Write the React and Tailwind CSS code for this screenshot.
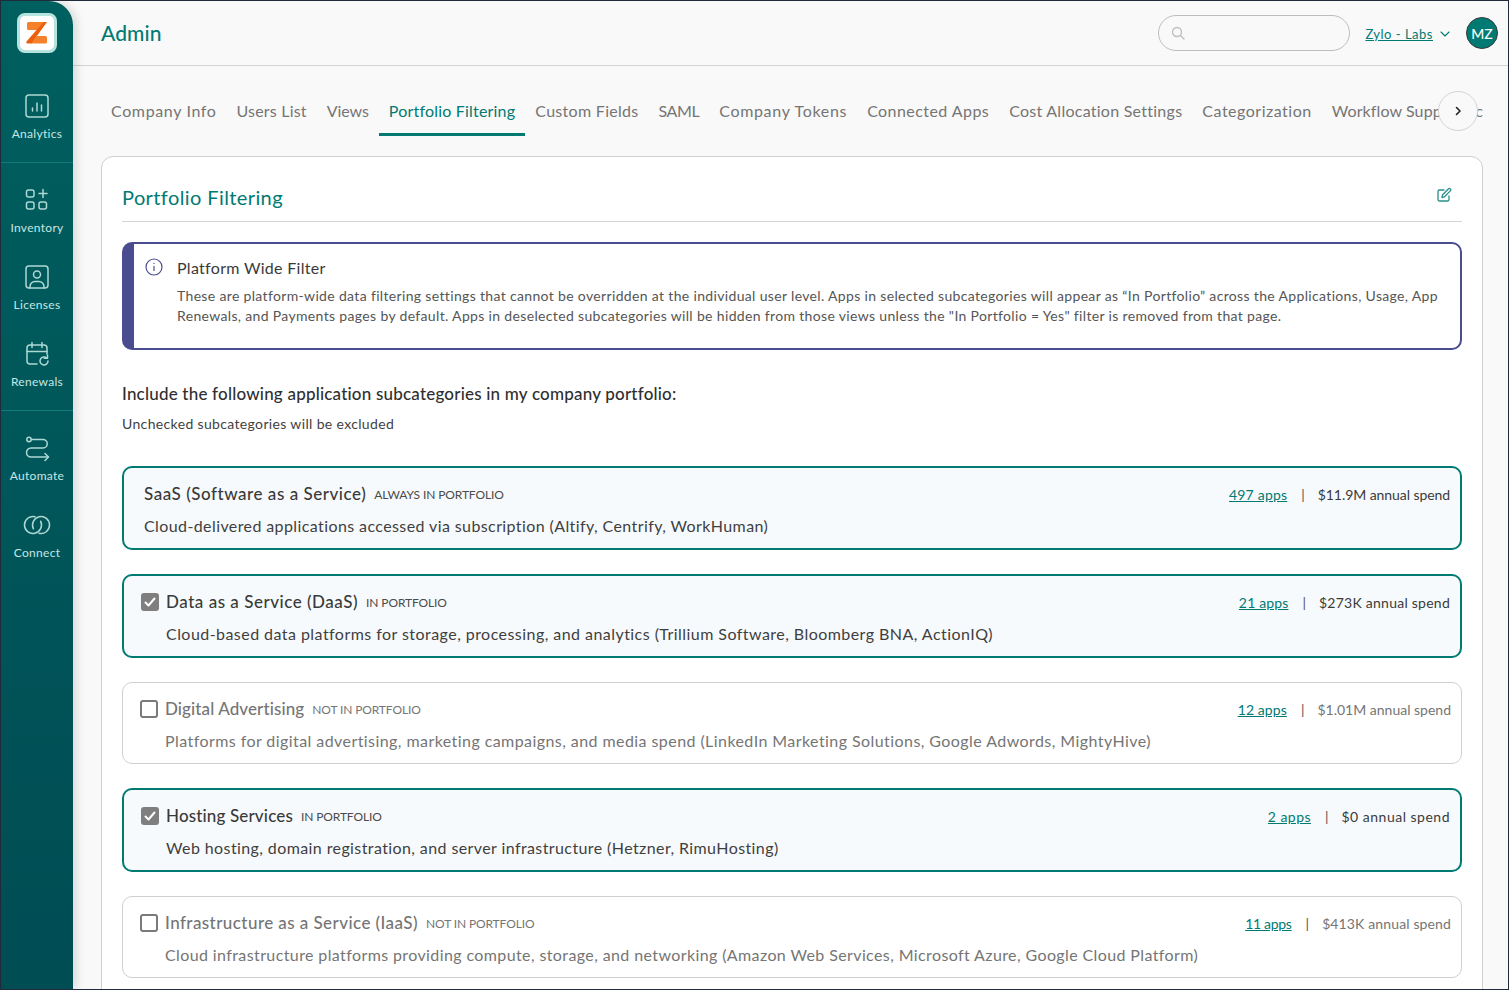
const ICON = { width: 28, height: 28, viewBox: "0 0 28 28", fill: "none", stroke: "#add8d4", strokeWidth: 1.5, strokeLinecap: "round", strokeLinejoin: "round" };

const icons = {
  analytics: (
    <svg {...ICON}>
      <rect x="3" y="3" width="22" height="22" rx="3" />
      <path d="M9.500 19v-3M14 19V11M18.500 19v-6" />
    </svg>
  ),
  inventory: (
    <svg {...ICON}>
      <rect x="3.500" y="4" width="7.500" height="7" rx="2" />
      <rect x="3.500" y="16" width="7.500" height="7" rx="2" />
      <rect x="16" y="16" width="7.500" height="7" rx="2" />
      <path d="M20 3.500v8M16 7.500h8" />
    </svg>
  ),
  licenses: (
    <svg {...ICON}>
      <rect x="3" y="3" width="22" height="22" rx="3" />
      <circle cx="14" cy="11.500" r="3.500" />
      <path d="M7 25v-1.500a5 5 0 0 1 5-5h4a5 5 0 0 1 5 5V25" />
    </svg>
  ),
  renewals: (
    <svg {...ICON}>
      <path d="M14 24H7a3 3 0 0 1-3-3V8a3 3 0 0 1 3-3h14a3 3 0 0 1 3 3v6" />
      <path d="M9 2.500v5M19 2.500v5M4 11.500h20" />
      <path d="M25 21a4 4 0 1 1-1.300-3" />
      <path d="M24.500 15v3.300h-3.200" />
    </svg>
  ),
  automate: (
    <svg {...ICON}>
      <circle cx="6" cy="5.500" r="2.200" />
      <path d="M8.500 5.500H20a4 4 0 0 1 0 8.500H8a4.500 4.500 0 0 0 0 9h17" />
      <path d="M22 19.500l3.500 3.500-3.500 3.500" />
    </svg>
  ),
  connect: (
    <svg {...ICON}>
      <path d="M12 5.700A8.500 8.500 0 1 0 17.600 10.200" />
      <path d="M16 22.300A8.500 8.500 0 1 0 10.400 17.800" />
    </svg>
  ),
};

const Logo = () => (
  <div className="w-10 h-10 rounded-lg bg-white border-[3px] border-[#b5e3de] flex items-center justify-center">
    <svg width="26" height="26" viewBox="0 0 26 26">
      <path d="M3 3.500a1.500 1.500 0 0 1 1.500-1.500H20l-7 8H4.500A1.500 1.500 0 0 1 3 8.500z" fill="#f5822a" />
      <path d="M13 16h8.500a1.500 1.500 0 0 1 1.500 1.500V22a1.500 1.500 0 0 1-1.500 1.500H7z" fill="#f5822a" />
      <path d="M19.500 2H23L7.500 23.500H3.500a1.200 1.200 0 0 1-1-1.900z" fill="#ec5f0d" />
    </svg>
  </div>
);

const NavItem = ({ icon, label }) => (
  <div className="h-[77px] flex flex-col items-center pt-[15px]">
    {icons[icon]}
    <span className="mt-[6px] text-[12px] leading-[16px] tracking-[0.3px] text-[#c6e6e3]">{label}</span>
  </div>
);

const tabs = [
  { t: "Company Info", c: "tracking-[0.63px]" },
  { t: "Users List", c: "tracking-[0.2px]" },
  { t: "Views", c: "tracking-[-0.1px]" },
  { t: "Portfolio Filtering", c: "tracking-[0.2px]" },
  { t: "Custom Fields", c: "tracking-[0.3px]" },
  { t: "SAML", c: "tracking-[-0.45px]" },
  { t: "Company Tokens", c: "tracking-[0.68px]" },
  { t: "Connected Apps", c: "tracking-[0.44px]" },
  { t: "Cost Allocation Settings", c: "tracking-[0.26px]" },
  { t: "Categorization", c: "tracking-[0.51px]" },
];

const rows = [
  { title: "SaaS (Software as a Service)", tag: "ALWAYS IN PORTFOLIO", desc: "Cloud-delivered applications accessed via subscription (Altify, Centrify, WorkHuman)", apps: "497 apps", spend: "$11.9M annual spend", state: "always", tt: "tracking-[0.53px]", dt: "tracking-[0.4px]", at: "tracking-[0.2px]", st: "tracking-[-0.07px]" },
  { title: "Data as a Service (DaaS)", tag: "IN PORTFOLIO", desc: "Cloud-based data platforms for storage, processing, and analytics (Trillium Software, Bloomberg BNA, ActionIQ)", apps: "21 apps", spend: "$273K annual spend", state: "on", tt: "tracking-[0.52px]", dt: "tracking-[0.45px]", at: "tracking-[0.15px]", st: "tracking-[0.25px]" },
  { title: "Digital Advertising", tag: "NOT IN PORTFOLIO", desc: "Platforms for digital advertising, marketing campaigns, and media spend (LinkedIn Marketing Solutions, Google Adwords, MightyHive)", apps: "12 apps", spend: "$1.01M annual spend", state: "off", tt: "tracking-[0.1px]", dt: "tracking-[0.43px]", at: "tracking-[0.1px]", st: "tracking-[0px]" },
  { title: "Hosting Services", tag: "IN PORTFOLIO", desc: "Web hosting, domain registration, and server infrastructure (Hetzner, RimuHosting)", apps: "2 apps", spend: "$0 annual spend", state: "on", tt: "tracking-[0.15px]", dt: "tracking-[0.4px]", at: "tracking-[0.45px]", st: "tracking-[0.5px]" },
  { title: "Infrastructure as a Service (IaaS)", tag: "NOT IN PORTFOLIO", desc: "Cloud infrastructure platforms providing compute, storage, and networking (Amazon Web Services, Microsoft Azure, Google Cloud Platform)", apps: "11 apps", spend: "$413K annual spend", state: "off", tt: "tracking-[0.43px]", dt: "tracking-[0.39px]", at: "tracking-[-0.3px]", st: "tracking-[0.13px]" },
];

const Check = ({ on }) =>
  on ? (
    <span className="w-[18px] h-[18px] rounded-[3px] bg-[#7f7f7f] flex items-center justify-center shrink-0">
      <svg width="14" height="14" viewBox="0 0 14 14" fill="none" stroke="#fff" strokeWidth="2" strokeLinecap="round" strokeLinejoin="round">
        <path d="M2.500 7.500l3 3 6-7" />
      </svg>
    </span>
  ) : (
    <span className="w-[18px] h-[18px] rounded-[3px] border-2 border-[#7a7a7a] bg-white shrink-0" />
  );

const Row = ({ title, tag, desc, apps, spend, state, tt, dt, at, st }) => {
  const off = state === "off";
  const always = state === "always";
  return (
    <div
      className={
        off
          ? "h-[82px] rounded-[10px] border border-[#d0d0d0] bg-white pl-[17px] pr-[10px] pt-[15px] flex gap-[7px]"
          : "h-[84px] rounded-[10px] border-2 border-[#007a73] bg-[#f7fafc] pl-[17px] pr-[10px] pt-[15px] flex gap-[7px]"
      }
    >
      {!always && (
        <span className="h-[22px] flex items-center">
          <Check on={!off} />
        </span>
      )}
      <div className={always ? "flex-1 min-w-0 pl-[3px]" : "flex-1 min-w-0"}>
        <div className="flex items-center h-[22px]">
          <span className={`text-[17px] font-medium ${tt} ${off ? "text-[#757575]" : "text-[#3a3a3a]"}`}>{title}</span>
          <span className={`ml-2 mt-[2px] text-[12px] tracking-[-0.12px] ${off ? "text-[#757575]" : "text-[#4a4a4a]"}`}>{tag}</span>
          <span className={`ml-auto text-[14px] underline text-[#007a73] ${at}`}>{apps}</span>
          <span className="ml-[14px] mr-[13px] text-[14px] text-[#555]">|</span>
          <span className={`text-[14px] ${st} ${off ? "text-[#757575]" : "text-[#3a3a3a]"}`}>{spend}</span>
        </div>
        <p className={`mt-[10px] text-[16px] leading-[22px] ${dt} ${off ? "text-[#757575]" : "text-[#3f3f3f]"}`}>{desc}</p>
      </div>
    </div>
  );
};

export default function App() {
  return (
    <div className="w-[1509px] h-[990px] overflow-hidden flex border border-[#1f2a3a] bg-[#f9f9f9] font-['Lato','Liberation_Sans',sans-serif] text-[#333]">
      <aside className="w-[72px] shrink-0 rounded-tr-[24px] bg-gradient-to-b from-[#005f5f] to-[#004d54] shadow-[4px_0_8px_rgba(0,0,0,0.12)] z-10">
        <div className="h-[76px] pt-[12px] flex justify-center">
          <Logo />
        </div>
        <div className="pb-2 border-b border-[#0f7a78]">
          <NavItem icon="analytics" label="Analytics" />
        </div>
        <div className="py-2 border-b border-[#0f7a78]">
          <NavItem icon="inventory" label="Inventory" />
          <NavItem icon="licenses" label="Licenses" />
          <NavItem icon="renewals" label="Renewals" />
        </div>
        <div className="pt-2">
          <NavItem icon="automate" label="Automate" />
          <NavItem icon="connect" label="Connect" />
        </div>
      </aside>

      <main className="flex-1 min-w-0">
        <header className="h-[65px] border-b border-[#d4d4d4] flex items-center pl-[28px] pr-[10px]">
          <h1 className="text-[21px] font-medium tracking-[0.1px] text-[#007a73]">Admin</h1>
          <div className="ml-auto w-[192px] h-[36px] rounded-full border border-[#bdbdbd] flex items-center pl-[12px]">
            <svg width="14" height="14" viewBox="0 0 14 14" fill="none" stroke="#bdbdbd" strokeWidth="1.300" strokeLinecap="round">
              <circle cx="6" cy="6" r="4.500" />
              <path d="M9.500 9.500l3.500 3.500" />
            </svg>
          </div>
          <span className="ml-[15px] mt-[3px] text-[13px] tracking-[0.5px] underline text-[#007a73]">Zylo - Labs</span>
          <svg className="ml-[7px] mt-[1px]" width="10" height="10" viewBox="0 0 10 10" fill="none" stroke="#007a73" strokeWidth="1.100" strokeLinecap="round" strokeLinejoin="round">
            <path d="M1 3l4 4 4-4" />
          </svg>
          <div className="ml-[16px] w-8 h-8 rounded-full bg-[#007a73] border border-[#3a3a3a] flex items-center justify-center text-white text-[14px] font-medium">MZ</div>
        </header>

        <div className="pl-[28px] pr-[25px]">
          <nav className="mt-[30px] h-[40px] mb-5 overflow-hidden">
            <div className="flex whitespace-nowrap">
              {tabs.map(({ t, c }) => (
                <span
                  key={t}
                  className={
                    t === "Portfolio Filtering"
                      ? `h-[40px] px-[10px] pt-[5px] text-[16px] leading-[20px] text-[#007a73] border-b-[3px] border-[#007a73] ${c}`
                      : `h-[40px] px-[10px] pt-[5px] text-[16px] leading-[20px] text-[#757575] ${c}`
                  }
                >
                  {t}
                </span>
              ))}
              <span className="h-[40px] px-[10px] pt-[5px] text-[16px] leading-[20px] text-[#757575] tracking-[0.1px]">
                Workflow Supp<span className="tracking-[-2.4px]">ort Syn</span>c
              </span>
            </div>
          </nav>
          <button className="absolute left-[1438px] top-[91px] w-10 h-10 rounded-full border border-[#d4d4d4] bg-[#f9f9f9] flex items-center justify-center">
            <svg width="12" height="12" viewBox="0 0 12 12" fill="none" stroke="#222" strokeWidth="1.600" strokeLinecap="round" strokeLinejoin="round">
              <path d="M4.500 2.500L8 6l-3.500 3.500" />
            </svg>
          </button>

          <section className="rounded-t-xl border border-[#cfcfcf] bg-white px-5 h-[900px]">
            <div className="h-[65px] border-b border-[#d4d4d4] flex items-center justify-between">
              <h2 className="mt-[15px] text-[20px] tracking-[0.4px] text-[#007a73]">Portfolio Filtering</h2>
              <svg className="mr-[10px] mt-[12px]" width="16" height="16" viewBox="0 0 16 16" fill="none" stroke="#2a8f89" strokeWidth="1.300" strokeLinecap="round" strokeLinejoin="round">
                <path d="M8 3H3.500A1.500 1.500 0 0 0 2 4.500v8A1.500 1.500 0 0 0 3.500 14h8a1.500 1.500 0 0 0 1.500-1.500V9" />
                <path d="M6 10.500l.6-2.800L12.600 1.700a1 1 0 0 1 1.500 0l.4.400a1 1 0 0 1 0 1.500L8.500 9.800z" />
              </svg>
            </div>

            <div className="mt-5 h-[108px] rounded-[10px] border-2 border-l-[12px] border-[#4a4c8f] bg-white flex pt-[13px]">
              <svg className="ml-[11px] mt-[1px] shrink-0" width="18" height="18" viewBox="0 0 18 18" fill="none" stroke="#4a4c8f" strokeWidth="1.200" strokeLinecap="round">
                <circle cx="9" cy="9" r="8" />
                <path d="M9 8.300v4.200M9 5.300v.1" />
              </svg>
              <div className="ml-[14px]">
                <div className="text-[16px] leading-[22px] tracking-[0.3px] text-[#3a3a3a]">Platform Wide Filter</div>
                <p className="mt-[7px] text-[14px] leading-[20px] tracking-[0.34px] text-[#555]">
                  These are platform-wide data filtering settings that cannot be overridden at the individual user level. Apps in selected subcategories will appear as “In Portfolio” across the Applications, Usage, App
                  <br />
                  Renewals, and Payments pages by default. Apps in deselected subcategories will be hidden from those views unless the "In Portfolio = Yes" filter is removed from that page.
                </p>
              </div>
            </div>

            <h3 className="mt-[32px] text-[17px] leading-[24px] font-medium tracking-[0.2px] text-[#2f2f2f]">Include the following application subcategories in my company portfolio:</h3>
            <p className="mt-[8px] text-[14px] leading-[20px] tracking-[0.35px] text-[#3f3f3f]">Unchecked subcategories will be excluded</p>

            <div className="mt-[32px] flex flex-col gap-6">
              {rows.map((r) => (
                <Row key={r.title} {...r} />
              ))}
            </div>
          </section>
        </div>
      </main>
    </div>
  );
}
